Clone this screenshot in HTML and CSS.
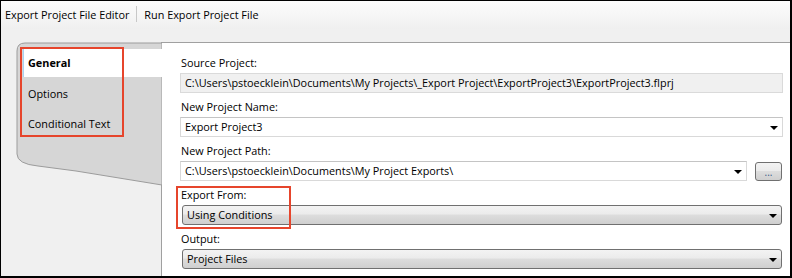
FILE: index.html
```html
<!DOCTYPE html>
<html lang="en">
<head>
    <meta charset="UTF-8">
    <title>Export Project File Editor</title>
    <link rel="stylesheet" href="styles.css">
</head>
<body>
    <div class="window">
        <div class="toolbar">
            <span class="tool">Export Project File Editor</span>
            <span class="tool-sep"></span>
            <span class="tool">Run Export Project File</span>
        </div>

        <div class="editor">
            <div class="sidebar">
                <svg class="sidebar-shape" width="146" height="146" viewBox="0 0 146 146">
                    <path d="M1,112 V9 Q1,1 9,1 H146 V143 L60,129 L22,124 Q1,122 1,112 Z" fill="#d6d6d6" stroke="#9c9c9c" stroke-width="1"/>
                </svg>
                <ul class="tabs">
                    <li class="tab active">General</li>
                    <li class="tab">Options</li>
                    <li class="tab">Conditional Text</li>
                </ul>
                <div class="callout callout-tabs"></div>
            </div>

            <div class="panel">
                <div class="field-group">
                    <label>Source Project:</label>
                    <div class="textbox readonly">C:\Users\pstoecklein\Documents\My Projects\_Export Project\ExportProject3\ExportProject3.flprj</div>
                </div>

                <div class="field-group">
                    <label>New Project Name:</label>
                    <div class="combo">Export Project3<span class="arrow"></span></div>
                </div>

                <div class="field-group">
                    <label>New Project Path:</label>
                    <div class="path-row">
                        <div class="combo">C:\Users\pstoecklein\Documents\My Project Exports\<span class="arrow"></span></div>
                        <button class="browse-btn">...</button>
                    </div>
                </div>

                <div class="field-group">
                    <label>Export From:</label>
                    <div class="dropdown">Using Conditions<span class="arrow"></span></div>
                    <div class="callout callout-export"></div>
                </div>

                <div class="field-group">
                    <label>Output:</label>
                    <div class="dropdown">Project Files<span class="arrow"></span></div>
                </div>
            </div>
        </div>
    </div>
</body>
</html>
```

FILE: styles.css
```css
* {
    margin: 0;
    padding: 0;
    box-sizing: border-box;
}

body {
    font-family: 'Open Sans', 'Noto Sans', sans-serif;
    font-size: 10.85px;
    color: #000;
    background: #fff;
}

.window {
    width: 792px;
    height: 278px;
    border: 1px solid #000;
    border-right-width: 2px;
    border-bottom-width: 2px;
    background: #f0f0f0;
    display: flex;
    flex-direction: column;
}

/* toolbar */
.toolbar {
    height: 28px;
    display: flex;
    align-items: center;
    padding-left: 4px;
    padding-bottom: 2px;
    background: linear-gradient(#fcfcfc 0%, #f6f6f6 50%, #efefef 100%);
}

.tool {
    white-space: nowrap;
}

.tool-sep {
    width: 1px;
    height: 16px;
    background: #c8c8c8;
    margin: 0 7px 0 7px;
}

/* editor body */
.editor {
    flex: 1;
    display: flex;
    padding-top: 13px;
    padding-left: 15px;
}

.sidebar {
    position: relative;
    width: 145px;
    height: 146px;
    flex-shrink: 0;
}

.sidebar-shape {
    position: absolute;
    left: 0;
    top: 0;
}

.tabs {
    position: relative;
    list-style: none;
    padding-top: 7px;
    padding-left: 7px;
}

.tab {
    height: 30px;
    line-height: 30px;
    padding-left: 5px;
    white-space: nowrap;
}

.tab.active {
    background: #fff;
    font-weight: 700;
    border-left: 1px solid #a9d2f2;
    padding-left: 4px;
    margin-right: -1px;
    position: relative;
    z-index: 2;
    height: 28px;
    line-height: 28px;
    margin-bottom: 2px;
}

.callout {
    position: absolute;
    border: 2px solid #e6452c;
    z-index: 3;
}

.callout-tabs {
    left: 4px;
    top: 5px;
    width: 104px;
    height: 90px;
}

.callout-export {
    left: -4px;
    top: -1px;
    width: 115px;
    height: 43px;
}

/* panel */
.panel {
    flex: 1;
    background: #fff;
    border-top: 1px solid #a0a0a0;
    border-left: 1px solid #a0a0a0;
    padding: 12px 7px 0 18px;
    display: flex;
    flex-direction: column;
    gap: 6px;
}

.field-group {
    position: relative;
    display: flex;
    flex-direction: column;
}

.field-group label {
    display: block;
    height: 16px;
    line-height: 16px;
    margin-bottom: 2px;
    padding-left: 1px;
}

.textbox,
.combo,
.dropdown {
    position: relative;
    height: 20px;
    line-height: 18px;
    padding-left: 4px;
    white-space: nowrap;
}

.textbox.readonly {
    background: #f0f0f0;
    border: 1px solid #dadada;
}

.combo {
    background: #fff;
    border: 1px solid #d9d9d9;
    border-top-color: #c4c4c4;
}

.dropdown {
    margin: 0 1px 0 2px;
    border: 1px solid #707070;
    border-radius: 3px;
    background: linear-gradient(#f3f3f3 0%, #ebebeb 45%, #dddddd 50%, #cfcfcf 100%);
}

.arrow {
    position: absolute;
    right: 4px;
    top: 8px;
    width: 0;
    height: 0;
    border-left: 4px solid transparent;
    border-right: 4px solid transparent;
    border-top: 4px solid #000;
}

.path-row {
    display: flex;
    align-items: center;
    gap: 8px;
}

.path-row .combo {
    flex: 1;
}

.browse-btn {
    width: 27px;
    height: 19px;
    margin-right: 1px;
    border: 1px solid #707070;
    border-radius: 3px;
    background: linear-gradient(#f3f3f3 0%, #ebebeb 45%, #dddddd 50%, #cfcfcf 100%);
    font-family: inherit;
    font-size: 10px;
    line-height: 10px;
    color: #3a5a8a;
    padding-top: 2px;
}
```
